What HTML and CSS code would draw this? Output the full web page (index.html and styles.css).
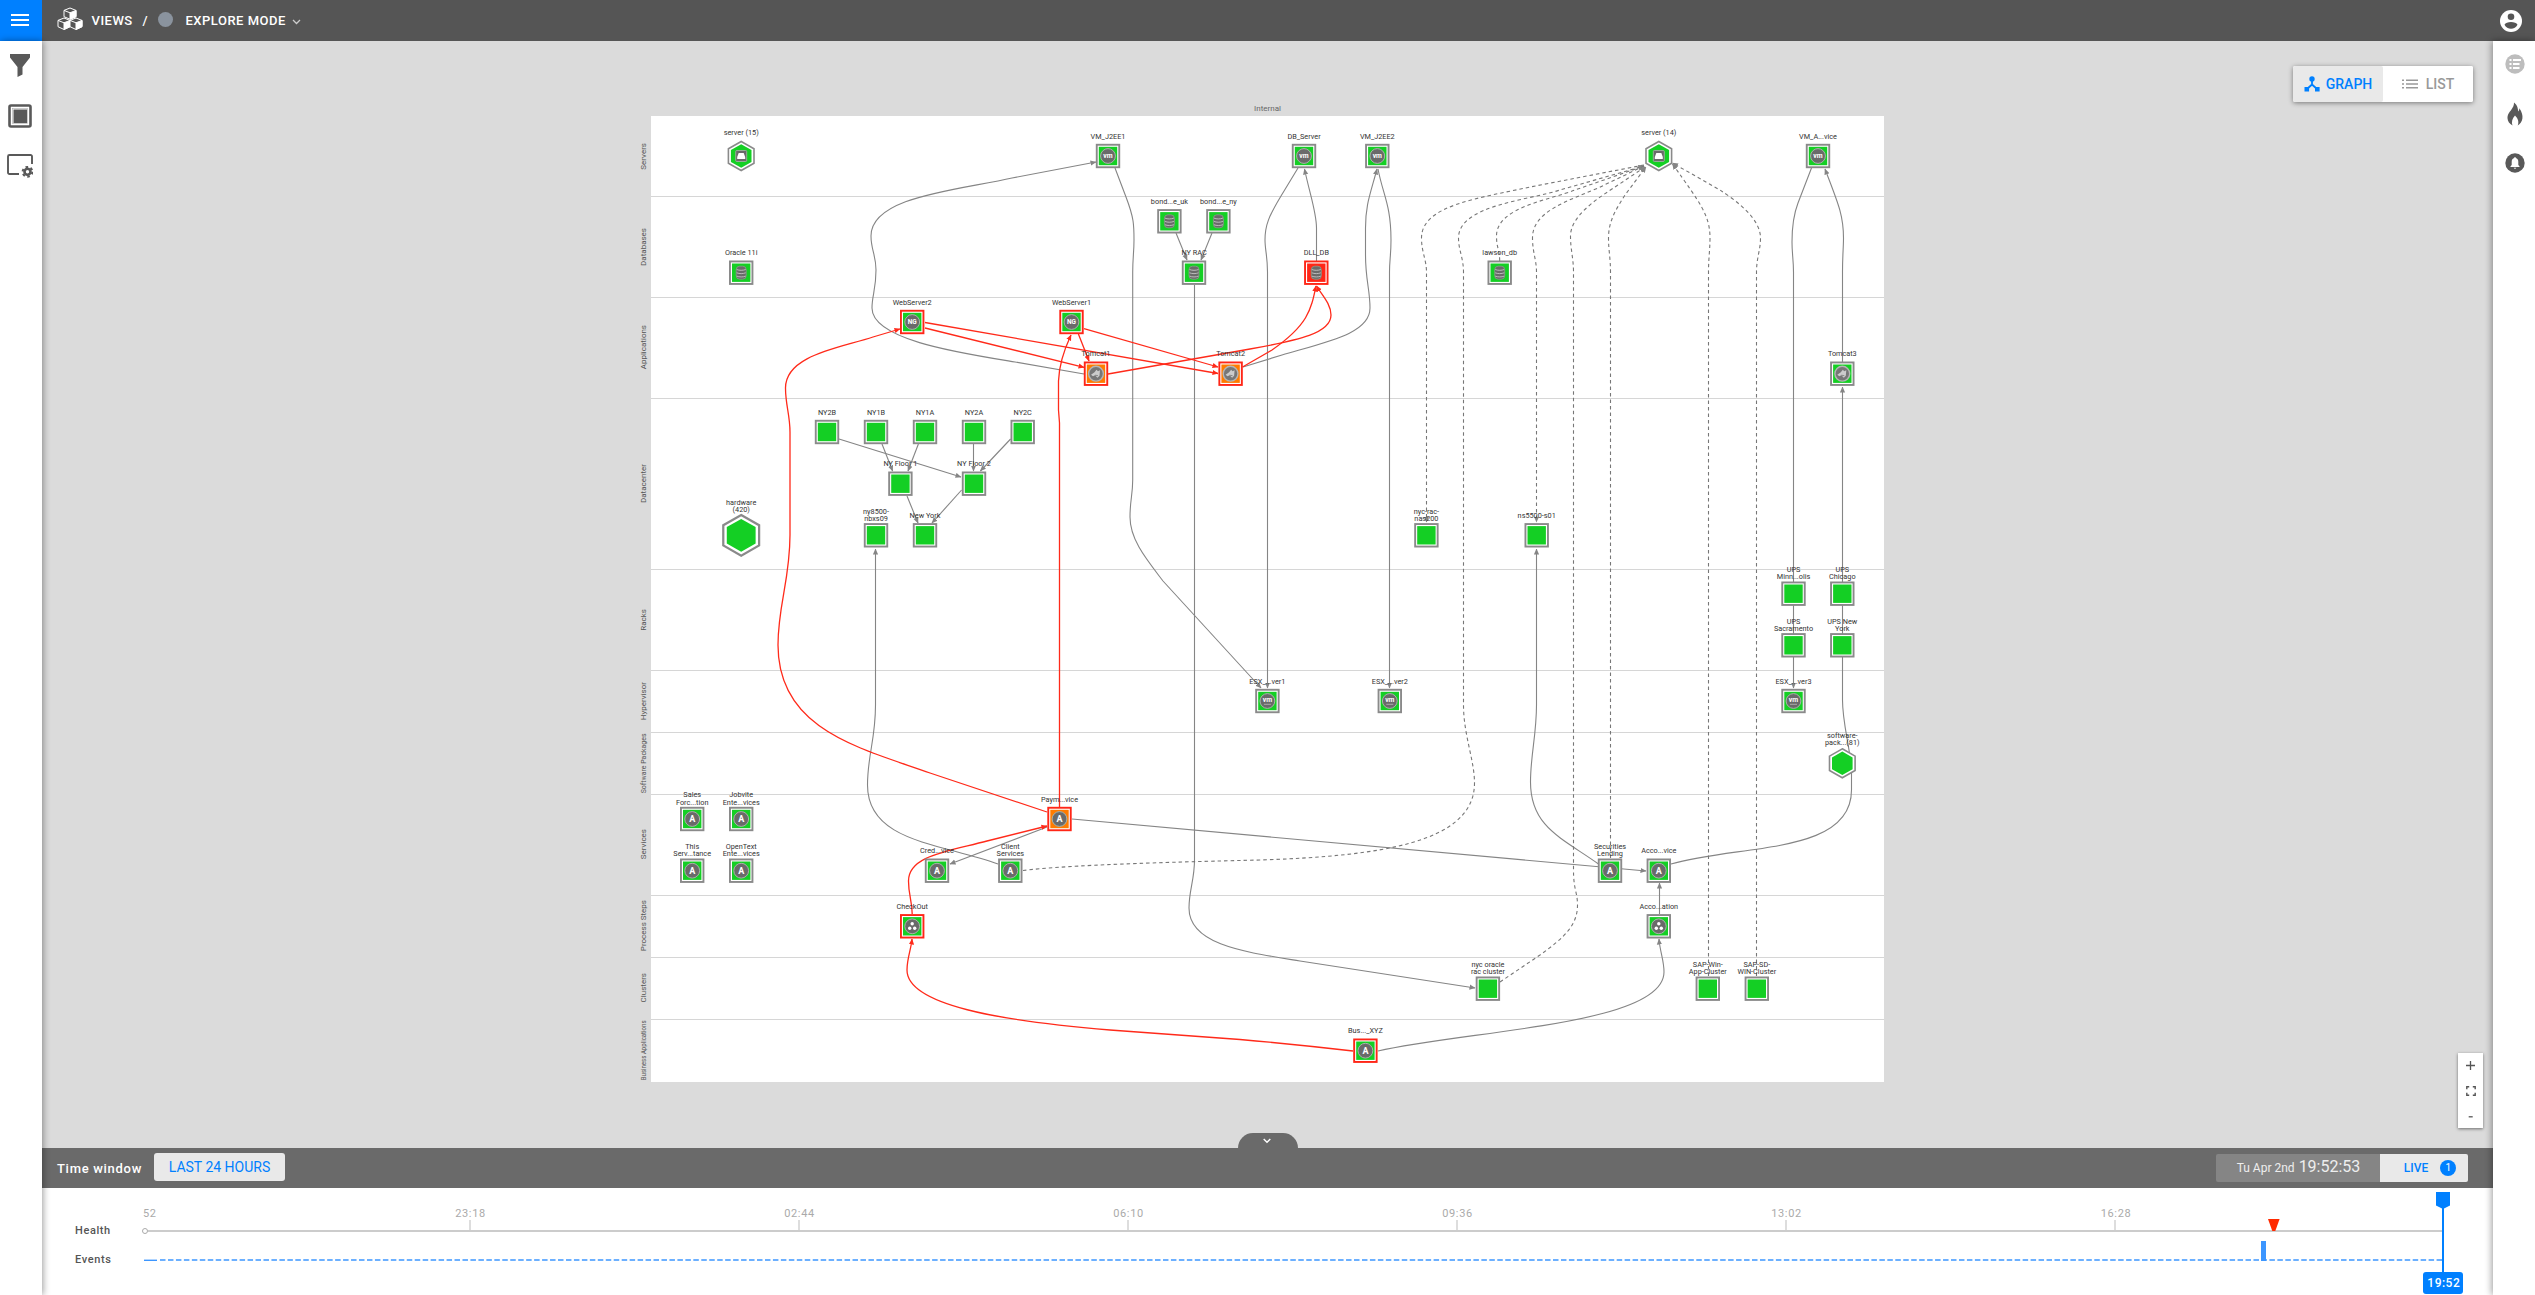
FILE: index.html
```html
<!DOCTYPE html>
<html lang="en">
<head>
<meta charset="utf-8">
<title>Views / Explore mode</title>
<link rel="stylesheet" href="styles.css">
</head>
<body>
<header class="topbar">
  <button class="menu-button" aria-label="Menu"><svg width="18" height="12" viewBox="0 0 18 12"><path d="M0 1h18M0 6h18M0 11h18" stroke="#fff" stroke-width="2"/></svg></button>
  <svg class="logo" width="26" height="24" viewBox="0 0 26 24">
    <g id="cubes" stroke="#fff" stroke-width="1" stroke-linejoin="round">
      <path d="M7 3.4 13 1l6 2.400v6.300L13 12.200 7 9.700Z" fill="none"/><path d="M13 5.800 19 3.400v6.300l-6 2.500Z" fill="#fff"/><path d="M7 3.400l6 2.400" fill="none"/>
      <path d="M1 13.400 7 11l6 2.400v6.300L7 22.500 1 19.700Z" fill="#555"/><path d="M7 15.800l6-2.400v6.300l-6 2.800Z" fill="#fff"/><path d="M1 13.400l6 2.400" fill="none"/>
      <path d="M13 13.400 19 11l6 2.400v6.300l-6 2.800-6-2.800Z" fill="#555"/><path d="M19 15.800l6-2.400v6.300l-6 2.800Z" fill="#fff"/><path d="M13 13.400l6 2.400" fill="none"/>
    </g>
  </svg>
  <span class="crumb">VIEWS</span><span class="slash">/</span><span class="mode-dot"></span><span class="crumb mode">EXPLORE MODE</span>
  <svg class="mode-caret" width="9" height="6" viewBox="0 0 9 6"><path d="M1 1l3.500 3.500L8 1" fill="none" stroke="#ccc" stroke-width="1.300"/></svg>
  <svg class="account" width="22" height="22" viewBox="0 0 22 22"><circle cx="11" cy="11" r="11" fill="#fff"/><circle cx="11" cy="6.800" r="3.300" fill="#555"/><path d="M4.500 14.800c1.500-3.700 11.500-3.700 13 0-2.500 5.200-10.500 5.200-13 0Z" fill="#555"/></svg>
</header>

<div class="body">
  <nav class="rail rail-left">
    <svg width="24" height="24" viewBox="0 0 24 24"><path d="M2 1h20v3.500L14.500 14v7.500L9.500 24V14L2 4.500Z" fill="#595959"/></svg>
    <svg width="24" height="24" viewBox="0 0 24 24"><rect x="1.500" y="1.500" width="21" height="21" rx="1.500" fill="#fff" stroke="#595959" stroke-width="2.600"/><rect x="5.500" y="5.500" width="13.500" height="13.500" fill="#595959"/><rect x="4.500" y="4.500" width="15" height="15" fill="none" stroke="#aaa" stroke-width=".6"/></svg>
    <svg width="26" height="24" viewBox="0 0 26 24"><path d="M12 20H2.500A1.500 1.500 0 0 1 1 18.500V2.500A1.500 1.500 0 0 1 2.500 1h21A1.500 1.500 0 0 1 25 2.500V10" fill="none" stroke="#595959" stroke-width="1.900"/><circle cx="20.500" cy="17.800" r="3" fill="none" stroke="#595959" stroke-width="2.600"/><circle cx="20.500" cy="17.800" r="4.900" fill="none" stroke="#595959" stroke-width="2" stroke-dasharray="2.600 2.530"/></svg>
  </nav>

  <main class="workspace">
    <section class="canvas">
      <div class="board-title">Internal</div>
      <div class="board">
        <div class="lane lane-servers"><span>Servers</span></div>
        <div class="lane"><span>Databases</span></div>
        <div class="lane"><span>Applications</span></div>
        <div class="lane"><span>Datacenter</span></div>
        <div class="lane"><span>Racks</span></div>
        <div class="lane"><span>Hypervisor</span></div>
        <div class="lane"><span class="squeeze">Software Packages</span></div>
        <div class="lane"><span>Services</span></div>
        <div class="lane"><span>Process Steps</span></div>
        <div class="lane"><span>Clusters</span></div>
        <div class="lane"><span class="squeeze-more">Business Applications</span></div>
      </div>

      <svg class="graph" viewBox="42 41 2451 1107">
        <defs>
          <marker id="arrow" viewBox="0 0 6 6" refX="5.500" refY="3" markerWidth="6" markerHeight="6" markerUnits="userSpaceOnUse" orient="auto"><path d="M0 .4 6 3 0 5.600Z" fill="#858585"/></marker>
          <marker id="arrow-red" viewBox="0 0 6 6" refX="5.500" refY="3" markerWidth="6" markerHeight="6" markerUnits="userSpaceOnUse" orient="auto"><path d="M0 .4 6 3 0 5.600Z" fill="#ff2a1a"/></marker>
          <g id="box"><rect x="-12.200" y="-12.200" width="24.400" height="24.400" class="frame"/><rect x="-10.300" y="-10.300" width="20.600" height="20.600" class="ring"/><rect x="-9.200" y="-9.200" width="18.400" height="18.400" class="core"/></g>
          <g id="hex"><path d="M0-14.500 12.800-7.200V7.200L0 14.500-12.800 7.200V-7.200Z" class="hexframe"/><path d="M0-11.700 10.300-5.900V5.900L0 11.700-10.300 5.900V-5.900Z" class="core"/></g>
          <g id="disc"><circle r="7.400" fill="#6a6a6a" stroke="#a9b3a9" stroke-width="1"/></g>
          <g id="vm"><use href="#disc"/><text class="glyph glyph-vm" y="2">vm</text></g>
          <g id="esx"><use href="#disc"/><text class="glyph glyph-vm" y=".5">vm</text><path d="M-3.500 3.300h7" stroke="#aaa" stroke-width="1"/></g>
          <g id="ng"><use href="#disc"/><text class="glyph glyph-ng" y="2.200">NG</text></g>
          <g id="app"><use href="#disc"/><text class="glyph glyph-a" y="3.100">A</text></g>
          <g id="step"><use href="#disc"/><circle cy="-2.500" r="1.700" fill="#fff"/><circle cx="-2.500" cy="1.900" r="1.700" fill="#fff"/><circle cx="2.500" cy="1.900" r="1.700" fill="#fff"/></g>
          <g id="cat"><circle r="7.400" fill="#777" stroke="#b5b5b5" stroke-width="1.400"/><path d="M-5 1-1.500-1.500.5-4 2-2.500 4-3.500 3.500 2 1.500 4-1 1.500-3 2.500Z" fill="#ccc"/><path d="M-1 1.500 2 2" stroke="#777" stroke-width=".8"/></g>
          <g id="db"><rect x="-5" y="-6.500" width="10" height="13" rx="3.500" fill="#6a6a6a" stroke="#8c9c8c" stroke-width=".8"/><path d="M-4.500-3.200c2.500 1.100 6.500 1.100 9 0M-4.500.1c2.500 1.100 6.500 1.100 9 0M-4.500 3.400c2.500 1.100 6.500 1.100 9 0" stroke="#c4c4c4" stroke-width=".9" fill="none"/></g>
          <g id="srv"><rect x="-5.500" y="-5.500" width="11" height="11" rx="1" fill="#6a6a6a" stroke="#a9b3a9" stroke-width=".8"/><path d="M-2.500-3h5L4 1v2h-8V1Z" fill="#fff"/></g>
        </defs>

        <g class="edges">
          <path d="M1084 374 1015 362C960 353 872 340 872 308C872 295 876 290 876 270C876 255 871 250 871 236C871 196 960 190 1012 178L1096 162"/>
          <path d="M1115 168 1126 197C1134 218 1134 225 1134 240C1134 252 1132.700 258 1132.700 272V480C1132.700 495 1130 500 1130 517C1130 540 1147 560 1163 581L1261 688"/>
          <path d="M1194.500 285V860C1194.500 880 1189 890 1189 908C1189 945 1245 952 1300 961L1475 988"/>
          <path d="M1176 233 1187 260"/>
          <path d="M1212 233 1201 260"/>
          <path d="M1298 168 1281 196C1269 216 1265 225 1265 240C1265 250 1267.500 256 1267.500 272V688"/>
          <path d="M1316.500 261V228C1316.500 212 1310 195 1304.500 169"/>
          <path d="M1243 367 1282 355C1330 341 1370 333 1370 308C1370 290 1365.500 280 1365.500 255V228C1365.500 205 1370 195 1377 169"/>
          <path d="M1378 169C1383 195 1391 205 1391 240C1391 255 1389.500 260 1389.500 272V688"/>
          <path d="M1659.500 914V883"/>
          <path d="M1378 1051C1470 1030 1664 1025 1664 972C1664 960 1660 952 1659 939"/>
          <path d="M1671 864C1740 844 1851.500 855 1851.500 790V773C1851 750 1842.500 725 1842.500 700V387"/>
          <path d="M1842.500 362V272C1842.500 255 1843.500 248 1843.500 238C1843.500 215 1838 203 1825 169"/>
          <path d="M1811.500 168 1798 203C1793 216 1792 228 1792 242C1792 254 1793.500 260 1793.500 272V688"/>
          <path d="M1072 819 1646 871"/>
          <path d="M1047 827 950 864"/>
          <path d="M998 864C940 843 867.500 842 867.500 785C867.500 755 875.500 740 875.500 705V549"/>
          <path d="M1598.500 864C1562 838 1530.500 827 1530.500 782C1530.500 755 1536.500 735 1536.500 705V549"/>
          <path d="M839 439 961 477"/>
          <path d="M882 444 892.600 471"/>
          <path d="M918.400 444 908 471"/>
          <path d="M973.500 444V471"/>
          <path d="M1010.600 439 980.400 471"/>
          <path d="M907 496 918 523"/>
          <path d="M961.600 490 932 523"/>
        </g>
        <g class="edges dashed">
          <path class="no-arrow" d="M1023 870.500C1060 866 1130 863 1260 860C1380 856 1474.500 843 1474.500 783C1474.500 760 1463.500 735 1463.500 705V272C1463.500 258 1458.500 250 1458.500 238C1458.500 205 1530 200 1560 190L1644 166"/>
          <path d="M1644 165 1530 187C1480 198 1421.500 205 1421.500 238C1421.500 252 1426.500 260 1426.500 272V522"/>
          <path d="M1499.700 261C1499.700 250 1496.500 248 1496.500 236C1496.500 207 1550 200 1575 190L1644 166"/>
          <path d="M1644 166 1598 188C1565 202 1532.500 212 1532.500 238C1532.500 252 1536.500 260 1536.500 272V522"/>
          <path d="M1500 982 1540 955C1565 937 1577.500 925 1577.500 905C1577.500 892 1573.500 890 1573.500 870V272C1573.500 258 1570.500 250 1570.500 236C1570.500 215 1600 197 1615 187L1645 167"/>
          <path d="M1610.500 858V272C1610.500 258 1608.500 250 1608.500 238C1608.500 220 1617 208 1625 195L1646 167"/>
          <path d="M1708.500 976V272C1708.500 258 1710 250 1710 238C1710 215 1700 203 1672.500 164"/>
          <path d="M1756.500 976V272C1756.500 258 1760.500 250 1760.500 238C1760.500 218 1735 200 1720 190L1672.500 163"/>
        </g>
        <g class="edges alert">
          <path d="M925 322.500 1218 373.500"/>
          <path d="M925 328 1084 367.300"/>
          <path d="M1084 328.700 1218 367"/>
          <path d="M1078.400 334 1089 361"/>
          <path d="M1108 374 1250 349C1300 340 1331 333 1331 315C1331 304 1322 295 1316.500 286"/>
          <path d="M1242.500 367 1272 350C1308 325 1311 310 1316 286"/>
          <path d="M1059.500 807V423L1058.500 410V381C1059 365 1064 350 1071 335"/>
          <path d="M1047 812 930 773C860 748 778 730 778 645C778 605 790 580 790 535V432C790 415 785.500 405 785.500 388C785.500 355 840 348 873 337L900 329"/>
          <path d="M912.200 914C912 900 908.500 895 908.500 881C908.500 856 945 852 987 841L1047 826"/>
          <path d="M1353 1051C1310 1046 1280 1043 1240 1039.500L1110 1030C1000 1021 907 1005 907 970C907 958 911 950 912 939"/>
        </g>

        <g class="nodes">
          <g transform="translate(741.200 156)"><use href="#hex"/><use href="#srv"/><text y="-20.800">server (15)</text></g>
          <g transform="translate(1108 156)"><use href="#box"/><use href="#vm"/><text y="-17.500">VM_J2EE1</text></g>
          <g transform="translate(1304 156)"><use href="#box"/><use href="#vm"/><text y="-17.500">DB_Server</text></g>
          <g transform="translate(1377.300 156)"><use href="#box"/><use href="#vm"/><text y="-17.500">VM_J2EE2</text></g>
          <g transform="translate(1658.800 156)"><use href="#hex"/><use href="#srv"/><text y="-20.800">server (14)</text></g>
          <g transform="translate(1818 156)"><use href="#box"/><use href="#vm"/><text y="-17.500">VM_A...vice</text></g>
          <g transform="translate(1169.400 221.300)"><use href="#box"/><use href="#db"/><text y="-17.500">bond...e_uk</text></g>
          <g transform="translate(1218.400 221.300)"><use href="#box"/><use href="#db"/><text y="-17.500">bond...e_ny</text></g>
          <g transform="translate(1194 272.700)"><use href="#box"/><use href="#db"/><text y="-17.500">NY RAC</text></g>
          <g transform="translate(741.200 272.700)"><use href="#box"/><use href="#db"/><text y="-17.500">Oracle 11i</text></g>
          <g class="red critical" transform="translate(1316.300 272.700)"><use href="#box"/><use href="#db"/><text y="-17.500">DLL_DB</text></g>
          <g transform="translate(1499.700 272.700)"><use href="#box"/><use href="#db"/><text y="-17.500">lawson_db</text></g>
          <g class="red" transform="translate(912.200 322)"><use href="#box"/><use href="#ng"/><text y="-17.500">WebServer2</text></g>
          <g class="red" transform="translate(1071.500 322)"><use href="#box"/><use href="#ng"/><text y="-17.500">WebServer1</text></g>
          <g class="red warn" transform="translate(1096 373.700)"><use href="#box"/><use href="#cat"/><text y="-17.500">Tomcat1</text></g>
          <g class="red warn" transform="translate(1230.600 373.700)"><use href="#box"/><use href="#cat"/><text y="-17.500">Tomcat2</text></g>
          <g transform="translate(1842.300 373.700)"><use href="#box"/><use href="#cat"/><text y="-17.500">Tomcat3</text></g>
          <g transform="translate(827 432)"><use href="#box"/><text y="-17.500">NY2B</text></g>
          <g transform="translate(876 432)"><use href="#box"/><text y="-17.500">NY1B</text></g>
          <g transform="translate(925 432)"><use href="#box"/><text y="-17.500">NY1A</text></g>
          <g transform="translate(974 432)"><use href="#box"/><text y="-17.500">NY2A</text></g>
          <g transform="translate(1022.700 432)"><use href="#box"/><text y="-17.500">NY2C</text></g>
          <g transform="translate(900.400 483.700)"><use href="#box"/><text y="-17.500">NY Floor 1</text></g>
          <g transform="translate(974 483.700)"><use href="#box"/><text y="-17.500">NY Floor 2</text></g>
          <g transform="translate(741.200 535.300)"><use href="#hex" transform="scale(1.400)"/><text><tspan x="0" y="-30.500">hardware</tspan><tspan x="0" y="-23">(420)</tspan></text></g>
          <g transform="translate(876 535.300)"><use href="#box"/><text><tspan x="0" y="-21.800">ny8500-</tspan><tspan x="0" y="-14.500">nbxs09</tspan></text></g>
          <g transform="translate(925 535.300)"><use href="#box"/><text y="-17.500">New York</text></g>
          <g transform="translate(1426.400 535.300)"><use href="#box"/><text><tspan x="0" y="-21.800">nyc-rac-</tspan><tspan x="0" y="-14.500">nas200</tspan></text></g>
          <g transform="translate(1536.700 535.300)"><use href="#box"/><text y="-17.500">ns5500-s01</text></g>
          <g transform="translate(1793.500 593.700)"><use href="#box"/><text><tspan x="0" y="-21.800">UPS</tspan><tspan x="0" y="-14.500">Minn...olis</tspan></text></g>
          <g transform="translate(1842.300 593.700)"><use href="#box"/><text><tspan x="0" y="-21.800">UPS</tspan><tspan x="0" y="-14.500">Chicago</tspan></text></g>
          <g transform="translate(1793.500 645.300)"><use href="#box"/><text><tspan x="0" y="-21.800">UPS</tspan><tspan x="0" y="-14.500">Sacramento</tspan></text></g>
          <g transform="translate(1842.300 645.300)"><use href="#box"/><text><tspan x="0" y="-21.800">UPS New</tspan><tspan x="0" y="-14.500">York</tspan></text></g>
          <g transform="translate(1267.400 701)"><use href="#box"/><use href="#esx"/><text y="-17.500">ESX_...ver1</text></g>
          <g transform="translate(1389.800 701)"><use href="#box"/><use href="#esx"/><text y="-17.500">ESX_...ver2</text></g>
          <g transform="translate(1793.500 701)"><use href="#box"/><use href="#esx"/><text y="-17.500">ESX_...ver3</text></g>
          <g transform="translate(1842.300 763.300)"><use href="#hex"/><text><tspan x="0" y="-25">software-</tspan><tspan x="0" y="-18">pack...(81)</tspan></text></g>
          <g transform="translate(692.200 819)"><use href="#box"/><use href="#app"/><text><tspan x="0" y="-21.800">Sales</tspan><tspan x="0" y="-14.500">Forc...tion</tspan></text></g>
          <g transform="translate(741.200 819)"><use href="#box"/><use href="#app"/><text><tspan x="0" y="-21.800">Jobvite</tspan><tspan x="0" y="-14.500">Ente...vices</tspan></text></g>
          <g transform="translate(692.200 870.700)"><use href="#box"/><use href="#app"/><text><tspan x="0" y="-21.800">This</tspan><tspan x="0" y="-14.500">Serv...tance</tspan></text></g>
          <g transform="translate(741.200 870.700)"><use href="#box"/><use href="#app"/><text><tspan x="0" y="-21.800">OpenText</tspan><tspan x="0" y="-14.500">Ente...vices</tspan></text></g>
          <g class="red warn" transform="translate(1059.500 819)"><use href="#box"/><use href="#app"/><text y="-17.500">Paym...vice</text></g>
          <g transform="translate(937 870.700)"><use href="#box"/><use href="#app"/><text y="-17.500">Cred...vice</text></g>
          <g transform="translate(1010.300 870.700)"><use href="#box"/><use href="#app"/><text><tspan x="0" y="-21.800">Client</tspan><tspan x="0" y="-14.500">Services</tspan></text></g>
          <g transform="translate(1610 870.700)"><use href="#box"/><use href="#app"/><text><tspan x="0" y="-21.800">Securities</tspan><tspan x="0" y="-14.500">Lending</tspan></text></g>
          <g transform="translate(1658.800 870.700)"><use href="#box"/><use href="#app"/><text y="-17.500">Acco...vice</text></g>
          <g class="red" transform="translate(912.200 926.300)"><use href="#box"/><use href="#step"/><text y="-17.500">CheckOut</text></g>
          <g transform="translate(1658.800 926.300)"><use href="#box"/><use href="#step"/><text y="-17.500">Acco...ation</text></g>
          <g transform="translate(1487.900 988.700)"><use href="#box"/><text><tspan x="0" y="-21.800">nyc oracle</tspan><tspan x="0" y="-14.500">rac cluster</tspan></text></g>
          <g transform="translate(1707.800 988.700)"><use href="#box"/><text><tspan x="0" y="-21.800">SAP-Win-</tspan><tspan x="0" y="-14.500">App-Cluster</tspan></text></g>
          <g transform="translate(1756.800 988.700)"><use href="#box"/><text><tspan x="0" y="-21.800">SAP-SD-</tspan><tspan x="0" y="-14.500">WIN-Cluster</tspan></text></g>
          <g class="red" transform="translate(1365.400 1050.700)"><use href="#box"/><use href="#app"/><text y="-17.500">Bus..._XYZ</text></g>
        </g>
      </svg>

      <div class="view-toggle">
        <button class="toggle active"><svg width="16" height="16" viewBox="0 0 16 16"><g fill="#0080ff"><circle cx="8" cy="3" r="2.700"/><path d="M.5 11h4.600v4.500H.5zM11 11h4.600v4.500H11z"/></g><path d="M8 3v5.500L3 13M8 8.500l5 4.500" fill="none" stroke="#0080ff" stroke-width="1.800"/></svg>GRAPH</button>
        <button class="toggle"><svg width="16" height="10" viewBox="0 0 16 10"><path d="M0 1.200h2M4 1.200h12M0 5h2M4 5h12M0 8.800h2M4 8.800h12" stroke="#999" stroke-width="1.600"/></svg>LIST</button>
      </div>

      <div class="zoom-control">
        <svg width="9" height="9" viewBox="0 0 9 9"><path d="M0 4.500h9M4.500 0v9" stroke="#555" stroke-width="1.300"/></svg>
        <svg width="10" height="10" viewBox="0 0 10 10"><path d="M.8 3.200V.8h2.400M6.800.8h2.400v2.400M9.200 6.800v2.400H6.800M3.200 9.200H.8V6.800" fill="none" stroke="#555" stroke-width="1.400"/></svg>
        <svg width="9" height="9" viewBox="0 0 9 9"><path d="M2.700 5.800h4" stroke="#555" stroke-width="1.300"/></svg>
      </div>
      <button class="panel-tab" aria-label="Collapse"><svg width="8" height="6" viewBox="0 0 8 6"><path d="M.7.900 4 4.200 7.300.9" fill="none" stroke="#fff" stroke-width="1.400"/></svg></button>
    </section>

    <section class="timebar">
      <span class="timebar-label">Time window</span>
      <button class="range">LAST 24 HOURS</button>
      <div class="clock"><span class="clock-date">Tu Apr 2nd</span><span class="clock-time">19:52:53</span></div>
      <button class="live">LIVE<span class="live-count">1</span></button>
    </section>

    <section class="timeline">
      <div class="timeline-labels"><span>Health</span><span>Events</span></div>
      <svg class="track" width="2351" height="107" viewBox="142 1188 2351 107">
        <g class="tick-labels"><text class="first" x="143" y="1217">52</text><text x="470.500" y="1217">23:18</text><text x="799.500" y="1217">02:44</text><text x="1128.500" y="1217">06:10</text><text x="1457.500" y="1217">09:36</text><text x="1786.500" y="1217">13:02</text><text x="2116" y="1217">16:28</text></g>
        <path d="M470 1220v11M799 1220v11M1128 1220v11M1457 1220v11M1786 1220v11M2115 1220v11" stroke="#bbb" stroke-width="1"/>
        <path d="M148 1231H2442" stroke="#ccc" stroke-width="2"/>
        <circle cx="145" cy="1231" r="2.500" fill="#fff" stroke="#aaa"/>
        <path d="M144 1260.300h13" stroke="#3c96ff" stroke-width="1.400"/>
        <path d="M160 1260H2442" stroke="#3c96ff" stroke-width="1.500" stroke-dasharray="5.500 2.460"/>
        <path d="M2261 1241h5v20h-5z" fill="#3c96ff"/>
        <path d="M2268 1219h11.600l-4.300 12h-3Z" fill="#ff2a00"/>
        <path d="M2443 1200v74" stroke="#0080ff" stroke-width="2"/>
        <path d="M2436 1192h14v13.500l-7 3.500-7-3.500Z" fill="#0080ff"/>
        <rect x="2423" y="1272" width="40" height="22" rx="3" fill="#0080ff"/>
        <text class="now" x="2443.800" y="1286.500">19:52</text>
      </svg>
    </section>
  </main>

  <nav class="rail rail-right">
    <svg width="20" height="20" viewBox="0 0 20 20"><circle cx="10" cy="10" r="9.700" fill="#bdbdbd"/><path d="M4.500 6h2M8 6h8M4.500 10h2M8 10h6.500M4.500 14h2M8 14h6.500" stroke="#fff" stroke-width="1.900"/></svg>
    <svg width="20" height="24" viewBox="0 0 20 24"><path d="M9 .5c4 3 3.500 6 4.500 9 .5-1 .9-2 .9-3.200 2.600 4 3.400 7 3 10.200-.4 3.500-2.500 5.500-4.700 7 1.500-3.500.3-7-2.700-10-2.600 3-3.900 6.500-2.500 10-3-1.600-4.800-4-5-7.200-.2-4 2-6.200 3.800-8.600C7.800 5.500 9.200 3.500 9 .5Z" fill="#595959"/></svg>
    <svg width="20" height="20" viewBox="0 0 20 20"><circle cx="10" cy="10" r="9.700" fill="#595959"/><path d="M5.500 14v-.8l1.200-1.200V8.700c0-2 1-3.200 2.500-3.600V4.300h1.600v.8c1.500.4 2.500 1.600 2.500 3.600V12l1.200 1.200v.8ZM8.700 14.700h2.600c-.3 1.300-2.300 1.300-2.600 0Z" fill="#fff"/></svg>
  </nav>
</div>
</body>
</html>
```
FILE: styles.css
```css
* { box-sizing: border-box; }

body {
  margin: 0;
  height: 1295px;
  display: flex;
  flex-direction: column;
  overflow: hidden;
  background: #dbdbdb;
  font-family: Roboto, "Liberation Sans", sans-serif;
}

button {
  border: 0;
  padding: 0;
  font: inherit;
}

svg { display: block; flex: none; }

/* Header */
.topbar {
  flex: 0 0 41px;
  display: flex;
  align-items: center;
  background: #555;
  color: #fff;
}

.menu-button {
  width: 42px;
  height: 41px;
  display: flex;
  align-items: center;
  justify-content: center;
  padding: 0 2px 1px 0;
  background: #0080ff;
}

.logo { margin: 0 9px 3px 14.500px; }

.crumb {
  width: 41px;
  font-size: 13px;
  font-weight: 500;
  letter-spacing: .5px;
  white-space: nowrap;
}

.crumb.mode { width: 99px; }

.slash { width: 25px; text-align: center; font-size: 13px; font-weight: 500; }

.mode-dot {
  width: 15px;
  height: 15px;
  margin: 0 13px 2px 0;
  border-radius: 50%;
  background: #8a939e;
}

.mode-caret { margin: 2px 0 0 7px; }

.account { margin: 0 13px 0 auto; }

/* Page body */
.body { flex: 1; display: flex; min-height: 0; }

.rail {
  z-index: 1;
  flex: 0 0 42px;
  display: flex;
  flex-direction: column;
  align-items: center;
  gap: 26.500px;
  padding-top: 12px;
  background: #fff;
}

.rail-left { box-shadow: 1px 0 7px rgba(0, 0, 0, .4); padding-right: 2px; }
.rail-right { box-shadow: -1px 0 7px rgba(0, 0, 0, .4); padding: 13px 0 0 1px; gap: 27.500px; }

.workspace { flex: 1; display: flex; flex-direction: column; min-width: 0; }

.canvas { position: relative; flex: 1; }

.board-title {
  height: 75px;
  padding: 62.500px 0 0 0;
  font-size: 8px;
  line-height: 10px;
  text-align: center;
  color: #666;
}

.board {
  display: grid;
  grid-template-rows: 80px 101px 101px 171px 101px 62px 62px 101px 62px 62px 62.500px;
  width: 1247px;
  margin-left: 595px;
}

.lane {
  min-height: 0;
  display: grid;
  grid-template: 100% / 14px 1233px;
}

.lane::after {
  content: "";
  background: #fff;
  border-top: 1px solid #d6d6d6;
}

.lane-servers::after { border-top: 0; }

.lane span {
  align-self: center;
  writing-mode: vertical-rl;
  transform: rotate(180deg);
  text-align: center;
  font-size: 8px;
  line-height: 14px;
  white-space: nowrap;
  color: #555;
}

/* Long lane names are condensed to the height of their lane */
.lane .squeeze { transform: rotate(180deg) scaleY(.87); }
.lane .squeeze-more { transform: rotate(180deg) scaleY(.76); }

.graph { position: absolute; inset: 0; width: 2451px; height: 1107px; }

.edges path { fill: none; stroke: #858585; stroke-width: 1.100; marker-end: url(#arrow); }
.edges.alert path { stroke: #ff2a1a; stroke-width: 1.300; marker-end: url(#arrow-red); }
.edges.dashed path { stroke: #777; stroke-dasharray: 3.500 3; }

.nodes { --frame: #8a8a8a; --core: #14cf24; }
.nodes .red { --frame: #ff2617; }
.nodes .warn { --core: #ff7b00; }
.nodes .critical { --core: #ff2617; }

.frame { fill: var(--frame); }
.ring { fill: #fff; }
.core { fill: var(--core); }
.hexframe { fill: #fff; stroke: var(--frame); stroke-width: 1.600; }

.nodes text { font-size: 7.300px; text-anchor: middle; fill: #333; }
.glyph { fill: #fff; font-weight: 700; text-anchor: middle; }
.glyph-vm { font-size: 6.800px; }
.glyph-ng { font-size: 6.500px; }
.glyph-a { font-size: 9px; }

/* Floating controls */
.view-toggle {
  position: absolute;
  top: 25px;
  right: 20px;
  display: flex;
  background: #fff;
  border-radius: 2px;
  box-shadow: 0 1px 5px rgba(0, 0, 0, .45);
}

.toggle {
  width: 90px;
  height: 36px;
  display: flex;
  align-items: center;
  justify-content: center;
  gap: 6px;
  border-radius: 2px;
  background: #fff;
  color: #999;
  font-size: 14px;
  font-weight: 500;
}

.toggle:not(.active) { gap: 8px; }
.toggle.active { background: #e9e9e9; color: #0080ff; }

.zoom-control {
  position: absolute;
  right: 10px;
  bottom: 20px;
  width: 25px;
  height: 75px;
  display: flex;
  flex-direction: column;
  align-items: center;
  justify-content: space-between;
  padding: 8px 0;
  background: #fff;
  box-shadow: 0 1px 3px rgba(0, 0, 0, .5);
}

.panel-tab {
  position: absolute;
  left: 1195.500px;
  bottom: 0;
  width: 60px;
  height: 15px;
  display: flex;
  justify-content: center;
  padding: 5px 1px 0 0;
  border-radius: 15px 15px 0 0;
  background: #6a6a6a;
}

/* Time window bar */
.timebar {
  flex: 0 0 40px;
  display: flex;
  align-items: center;
  padding: 0 25px 0 15px;
  background: #6a6a6a;
  color: #fff;
}

.timebar-label { width: 97px; font-size: 13px; font-weight: 500; letter-spacing: .7px; }

.range {
  width: 131px;
  height: 28px;
  margin-bottom: 2px;
  border-radius: 3px;
  background: #e9e9e9;
  color: #0080ff;
  font-size: 14px;
}

.clock {
  width: 164px;
  height: 28px;
  margin-left: auto;
  display: flex;
  align-items: baseline;
  justify-content: center;
  gap: 4px;
  padding-left: 1px;
  line-height: 26px;
  border-radius: 2px 0 0 2px;
  background: #858585;
  color: #eee;
}

.clock-date { font-size: 12px; }
.clock-time { font-size: 16px; }

.live {
  width: 88px;
  height: 28px;
  display: flex;
  align-items: center;
  justify-content: center;
  gap: 12px;
  padding-left: 12px;
  border-radius: 0 2px 2px 0;
  background: #e9e9e9;
  color: #0080ff;
  font-size: 12px;
  font-weight: 500;
}

.live-count {
  width: 16px;
  height: 16px;
  border-radius: 50%;
  background: #0080ff;
  color: #fff;
  font-size: 10px;
  font-weight: 400;
  line-height: 16px;
}

/* Timeline */
.timeline { flex: 0 0 107px; display: flex; background: #fff; }

.timeline-labels {
  width: 100px;
  padding: 36px 0 0 33px;
  display: flex;
  flex-direction: column;
  gap: 15px;
  font-size: 11px;
  font-weight: 500;
  line-height: 14px;
  letter-spacing: .6px;
  color: #555;
}

.track { overflow: visible; }
.tick-labels text { font-size: 11px; letter-spacing: .6px; text-anchor: middle; fill: #aaa; }
.tick-labels .first { text-anchor: start; }
.now { font-size: 12px; font-weight: 500; letter-spacing: .5px; text-anchor: middle; fill: #fff; }
```
